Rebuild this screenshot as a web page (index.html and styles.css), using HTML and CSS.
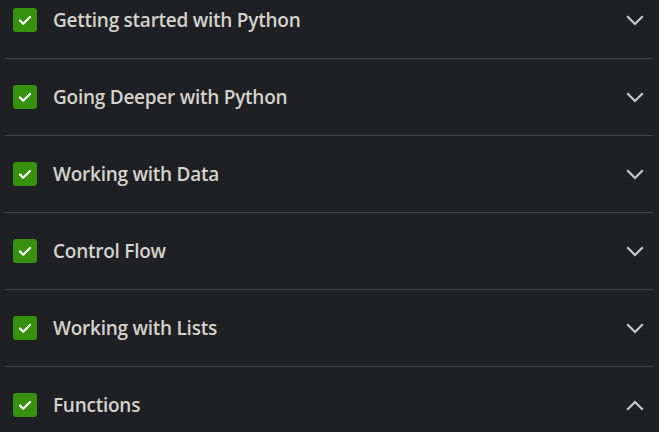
FILE: index.html
```html
<!DOCTYPE html>
<html>
<head>
<meta charset="utf-8">
<link rel="stylesheet" href="styles.css">
</head>
<body>
<ul class="modules">
  <li class="module">
    <span class="check"><svg viewBox="0 0 24 24" width="24" height="24"><path d="M7 12.5l3.2 3.2L17 9" fill="none" stroke="#fff" stroke-width="2.2" stroke-linecap="round" stroke-linejoin="round"/></svg></span>
    <span class="title">Getting started with Python</span>
    <svg class="chev" viewBox="0 0 18 11" width="18" height="11"><path d="M2 2l7 7 7-7" fill="none" stroke="#c9c9c9" stroke-width="2.2" stroke-linecap="square"/></svg>
  </li>
  <li class="module">
    <span class="check"><svg viewBox="0 0 24 24" width="24" height="24"><path d="M7 12.5l3.2 3.2L17 9" fill="none" stroke="#fff" stroke-width="2.2" stroke-linecap="round" stroke-linejoin="round"/></svg></span>
    <span class="title">Going Deeper with Python</span>
    <svg class="chev" viewBox="0 0 18 11" width="18" height="11"><path d="M2 2l7 7 7-7" fill="none" stroke="#c9c9c9" stroke-width="2.2" stroke-linecap="square"/></svg>
  </li>
  <li class="module">
    <span class="check"><svg viewBox="0 0 24 24" width="24" height="24"><path d="M7 12.5l3.2 3.2L17 9" fill="none" stroke="#fff" stroke-width="2.2" stroke-linecap="round" stroke-linejoin="round"/></svg></span>
    <span class="title">Working with Data</span>
    <svg class="chev" viewBox="0 0 18 11" width="18" height="11"><path d="M2 2l7 7 7-7" fill="none" stroke="#c9c9c9" stroke-width="2.2" stroke-linecap="square"/></svg>
  </li>
  <li class="module">
    <span class="check"><svg viewBox="0 0 24 24" width="24" height="24"><path d="M7 12.5l3.2 3.2L17 9" fill="none" stroke="#fff" stroke-width="2.2" stroke-linecap="round" stroke-linejoin="round"/></svg></span>
    <span class="title">Control Flow</span>
    <svg class="chev" viewBox="0 0 18 11" width="18" height="11"><path d="M2 2l7 7 7-7" fill="none" stroke="#c9c9c9" stroke-width="2.2" stroke-linecap="square"/></svg>
  </li>
  <li class="module">
    <span class="check"><svg viewBox="0 0 24 24" width="24" height="24"><path d="M7 12.5l3.2 3.2L17 9" fill="none" stroke="#fff" stroke-width="2.2" stroke-linecap="round" stroke-linejoin="round"/></svg></span>
    <span class="title">Working with Lists</span>
    <svg class="chev" viewBox="0 0 18 11" width="18" height="11"><path d="M2 2l7 7 7-7" fill="none" stroke="#c9c9c9" stroke-width="2.2" stroke-linecap="square"/></svg>
  </li>
  <li class="module">
    <span class="check"><svg viewBox="0 0 24 24" width="24" height="24"><path d="M7 12.5l3.2 3.2L17 9" fill="none" stroke="#fff" stroke-width="2.2" stroke-linecap="round" stroke-linejoin="round"/></svg></span>
    <span class="title">Functions</span>
    <svg class="chev" viewBox="0 0 18 11" width="18" height="11"><path d="M2 9l7-7 7 7" fill="none" stroke="#c9c9c9" stroke-width="2.2" stroke-linecap="square"/></svg>
  </li>
</ul>
</body>
</html>
```
FILE: styles.css
```css
html, body {
  margin: 0;
  padding: 0;
  background: #1f2023;
  overflow: hidden;
  height: 432px;
}
.modules {
  list-style: none;
  margin: -18px 0 0 0;
  padding: 0 6px 0 5px;
  font-family: "Open Sans", "Noto Sans", sans-serif;
}
.module {
  display: flex;
  align-items: center;
  height: 76px;
  border-bottom: 1px solid #434447;
  padding: 0 9px 0 8px;
}
.check {
  width: 24px;
  height: 24px;
  border-radius: 3px;
  background: #36920e;
  flex: none;
  display: flex;
}
.title {
  flex: 1;
  margin-left: 16px;
  color: #d4d2cd;
  font-size: 19px;
  font-weight: 600;
  letter-spacing: -0.25px;
}
.chev {
  flex: none;
  display: block;
}
```
